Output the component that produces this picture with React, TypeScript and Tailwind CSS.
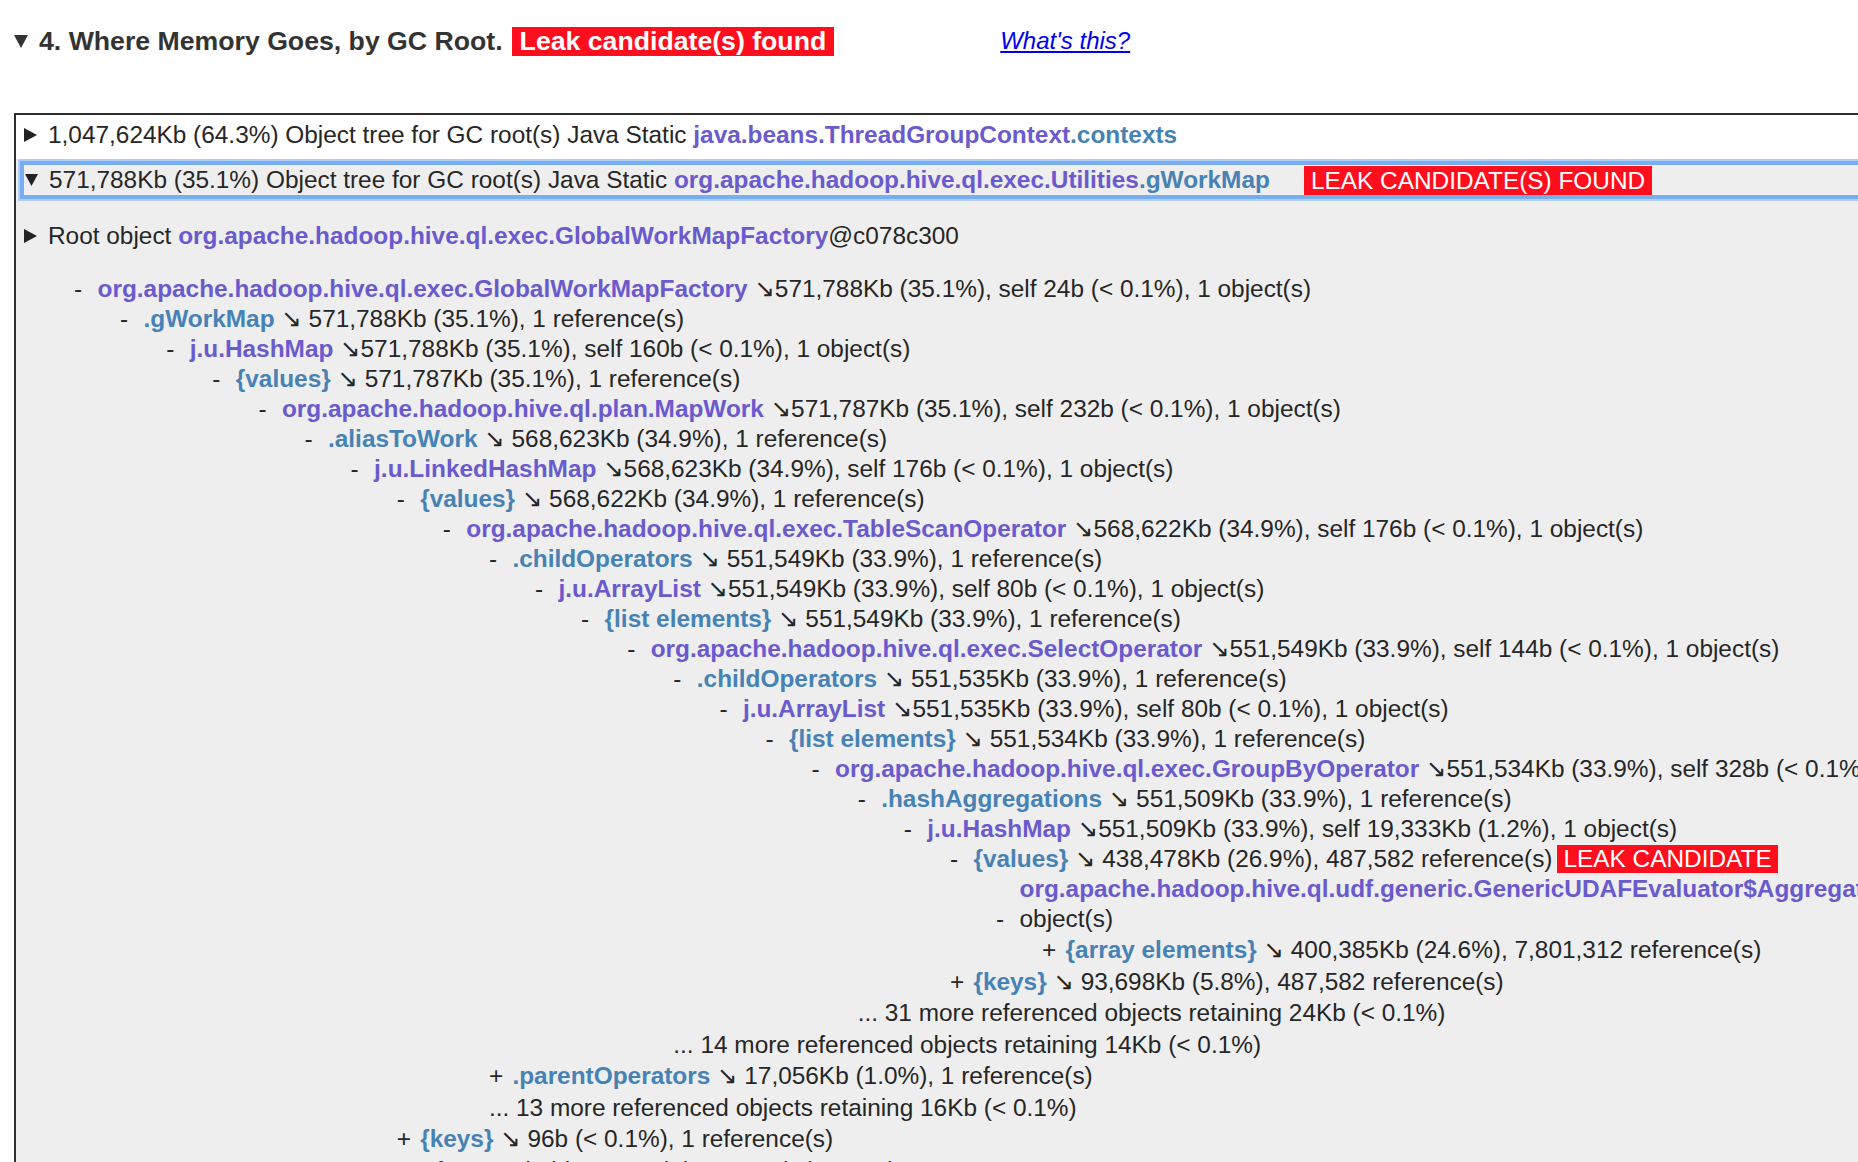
import React from 'react';

type Kind = 'cls' | 'fld' | 'txt';
interface Row {
  d: number;
  m: '-' | '+' | '...' | '';
  name?: string;
  kind?: Kind;
  rest?: string;
  badge?: string;
}

const rows: Row[] = [
  { d: 0, m: '-', name: 'org.apache.hadoop.hive.ql.exec.GlobalWorkMapFactory', kind: 'cls', rest: ' ↘571,788Kb (35.1%), self 24b (< 0.1%), 1 object(s)' },
  { d: 1, m: '-', name: '.gWorkMap', kind: 'fld', rest: ' ↘ 571,788Kb (35.1%), 1 reference(s)' },
  { d: 2, m: '-', name: 'j.u.HashMap', kind: 'cls', rest: ' ↘571,788Kb (35.1%), self 160b (< 0.1%), 1 object(s)' },
  { d: 3, m: '-', name: '{values}', kind: 'fld', rest: ' ↘ 571,787Kb (35.1%), 1 reference(s)' },
  { d: 4, m: '-', name: 'org.apache.hadoop.hive.ql.plan.MapWork', kind: 'cls', rest: ' ↘571,787Kb (35.1%), self 232b (< 0.1%), 1 object(s)' },
  { d: 5, m: '-', name: '.aliasToWork', kind: 'fld', rest: ' ↘ 568,623Kb (34.9%), 1 reference(s)' },
  { d: 6, m: '-', name: 'j.u.LinkedHashMap', kind: 'cls', rest: ' ↘568,623Kb (34.9%), self 176b (< 0.1%), 1 object(s)' },
  { d: 7, m: '-', name: '{values}', kind: 'fld', rest: ' ↘ 568,622Kb (34.9%), 1 reference(s)' },
  { d: 8, m: '-', name: 'org.apache.hadoop.hive.ql.exec.TableScanOperator', kind: 'cls', rest: ' ↘568,622Kb (34.9%), self 176b (< 0.1%), 1 object(s)' },
  { d: 9, m: '-', name: '.childOperators', kind: 'fld', rest: ' ↘ 551,549Kb (33.9%), 1 reference(s)' },
  { d: 10, m: '-', name: 'j.u.ArrayList', kind: 'cls', rest: ' ↘551,549Kb (33.9%), self 80b (< 0.1%), 1 object(s)' },
  { d: 11, m: '-', name: '{list elements}', kind: 'fld', rest: ' ↘ 551,549Kb (33.9%), 1 reference(s)' },
  { d: 12, m: '-', name: 'org.apache.hadoop.hive.ql.exec.SelectOperator', kind: 'cls', rest: ' ↘551,549Kb (33.9%), self 144b (< 0.1%), 1 object(s)' },
  { d: 13, m: '-', name: '.childOperators', kind: 'fld', rest: ' ↘ 551,535Kb (33.9%), 1 reference(s)' },
  { d: 14, m: '-', name: 'j.u.ArrayList', kind: 'cls', rest: ' ↘551,535Kb (33.9%), self 80b (< 0.1%), 1 object(s)' },
  { d: 15, m: '-', name: '{list elements}', kind: 'fld', rest: ' ↘ 551,534Kb (33.9%), 1 reference(s)' },
  { d: 16, m: '-', name: 'org.apache.hadoop.hive.ql.exec.GroupByOperator', kind: 'cls', rest: ' ↘551,534Kb (33.9%), self 328b (< 0.1%), 1 object(s)' },
  { d: 17, m: '-', name: '.hashAggregations', kind: 'fld', rest: ' ↘ 551,509Kb (33.9%), 1 reference(s)' },
  { d: 18, m: '-', name: 'j.u.HashMap', kind: 'cls', rest: ' ↘551,509Kb (33.9%), self 19,333Kb (1.2%), 1 object(s)' },
  { d: 19, m: '-', name: '{values}', kind: 'fld', rest: ' ↘ 438,478Kb (26.9%), 487,582 reference(s)', badge: 'LEAK CANDIDATE' },
  { d: 20, m: '', name: 'org.apache.hadoop.hive.ql.udf.generic.GenericUDAFEvaluator$AggregationBuffer[]', kind: 'cls', rest: '' },
  { d: 20, m: '-', name: 'object(s)', kind: 'txt', rest: '' },
  { d: 21, m: '+', name: '{array elements}', kind: 'fld', rest: ' ↘ 400,385Kb (24.6%), 7,801,312 reference(s)' },
  { d: 19, m: '+', name: '{keys}', kind: 'fld', rest: ' ↘ 93,698Kb (5.8%), 487,582 reference(s)' },
  { d: 17, m: '...', rest: '31 more referenced objects retaining 24Kb (< 0.1%)' },
  { d: 13, m: '...', rest: '14 more referenced objects retaining 14Kb (< 0.1%)' },
  { d: 9, m: '+', name: '.parentOperators', kind: 'fld', rest: ' ↘ 17,056Kb (1.0%), 1 reference(s)' },
  { d: 9, m: '...', rest: '13 more referenced objects retaining 16Kb (< 0.1%)' },
  { d: 7, m: '+', name: '{keys}', kind: 'fld', rest: ' ↘ 96b (< 0.1%), 1 reference(s)' },
  { d: 5, m: '...', rest: '2 more referenced objects retaining 1,248b (< 0.1%)' },
];

function Name({ name, kind }: { name?: string; kind?: Kind }) {
  if (!name) return null;
  if (kind === 'cls') return <span className="font-bold text-[#6a5acd]">{name}</span>;
  if (kind === 'fld') return <span className="font-bold text-[#4682b4]">{name}</span>;
  return <span>{name}</span>;
}

function TreeRow({ r }: { r: Row }) {
  const tall = r.m === '+' || r.m === '...';
  return (
    <div
      className={tall ? 'h-[31.5px] leading-[31.5px] whitespace-nowrap' : 'h-[30px] leading-[30px] whitespace-nowrap'}
      style={{ paddingLeft: 58 + 46.1 * r.d }}
    >
      {r.m === '...' ? (
        <span>... {r.rest}</span>
      ) : (
        <>
          <span className="inline-block w-[23.5px]">{r.m}</span>
          <Name name={r.name} kind={r.kind} />
          <span>{r.rest}</span>
          {r.badge && (
            <span className="inline-block ml-[5px] px-[6px] bg-[#ff0e1e] text-white leading-[28px]">{r.badge}</span>
          )}
        </>
      )}
    </div>
  );
}

function TriRight() {
  return (
    <svg width="13" height="14" viewBox="0 0 13 14" className="block shrink-0">
      <polygon points="0,0 13,7 0,14" fill="#222" />
    </svg>
  );
}

function TriDown() {
  return (
    <svg width="13" height="12" viewBox="0 0 13 12" className="block shrink-0">
      <polygon points="0,0 13,0 6.5,12" fill="#222" />
    </svg>
  );
}

export default function App() {
  return (
    <div className="w-[1858px] h-[1162px] overflow-hidden bg-white text-[#262626] text-[24.4px] font-['Liberation_Sans','DejaVu_Sans',sans-serif]">
      {/* Heading */}
      <div className="flex items-center h-[30px] mt-[26px] whitespace-nowrap">
        <span className="ml-[14px]">
          <svg width="14" height="13" viewBox="0 0 14 13" className="block">
            <polygon points="0,0 14,0 7,13" fill="#333" />
          </svg>
        </span>
        <span className="ml-[11px] text-[26.67px] font-bold text-[#333] leading-[30px]">4. Where Memory Goes, by GC Root.</span>
        <span className="ml-[9px] h-[29px] px-[8px] bg-[#ff0e1e] text-white font-bold text-[26.67px] leading-[29px]">
          Leak candidate(s) found
        </span>
        <a className="ml-[166px] italic underline text-[#0000ee] text-[24px] leading-[30px] cursor-pointer">What's this?</a>
      </div>

      {/* Panel */}
      <div className="ml-[14px] mt-[57px] w-[2400px] border-t-2 border-l-2 border-[#2e2e2e]">
        {/* Row 1 */}
        <div className="bg-white h-[44px] pt-[5px]">
          <div className="flex items-center h-[30px] whitespace-nowrap">
            <span className="ml-[8px]"><TriRight /></span>
            <span className="ml-[11px] leading-[30px]">
              1,047,624Kb (64.3%) Object tree for GC root(s) Java Static{' '}
              <span className="font-bold text-[#6a5acd]">java.beans.ThreadGroupContext</span>
              <span className="font-bold text-[#4682b4]">.contexts</span>
            </span>
          </div>
        </div>

        {/* Expanded */}
        <div className="bg-[#eeeeee] pt-[2px] pb-[40px]">
          <div className="ml-[4px] h-[38px] border-[4px] border-[#78adf0] shadow-[0_0_0_2px_#afcff6] flex items-center whitespace-nowrap">
            <span className="ml-[1px]"><TriDown /></span>
            <span className="ml-[11px] leading-[30px]">
              571,788Kb (35.1%) Object tree for GC root(s) Java Static{' '}
              <span className="font-bold text-[#6a5acd]">org.apache.hadoop.hive.ql.exec.Utilities</span>
              <span className="font-bold text-[#4682b4]">.gWorkMap</span>
            </span>
            <span className="ml-[34px] px-[7px] bg-[#ff0e1e] text-white leading-[29px]">LEAK CANDIDATE(S) FOUND</span>
          </div>

          <div className="mt-[22px] flex items-center h-[30px] whitespace-nowrap">
            <span className="ml-[8px]"><TriRight /></span>
            <span className="ml-[11px] leading-[30px]">
              Root object{' '}
              <span className="font-bold text-[#6a5acd]">org.apache.hadoop.hive.ql.exec.GlobalWorkMapFactory</span>
              @c078c300
            </span>
          </div>

          <div className="mt-[23px]">
            {rows.map((r, i) => (
              <TreeRow key={i} r={r} />
            ))}
          </div>
        </div>
      </div>
    </div>
  );
}
